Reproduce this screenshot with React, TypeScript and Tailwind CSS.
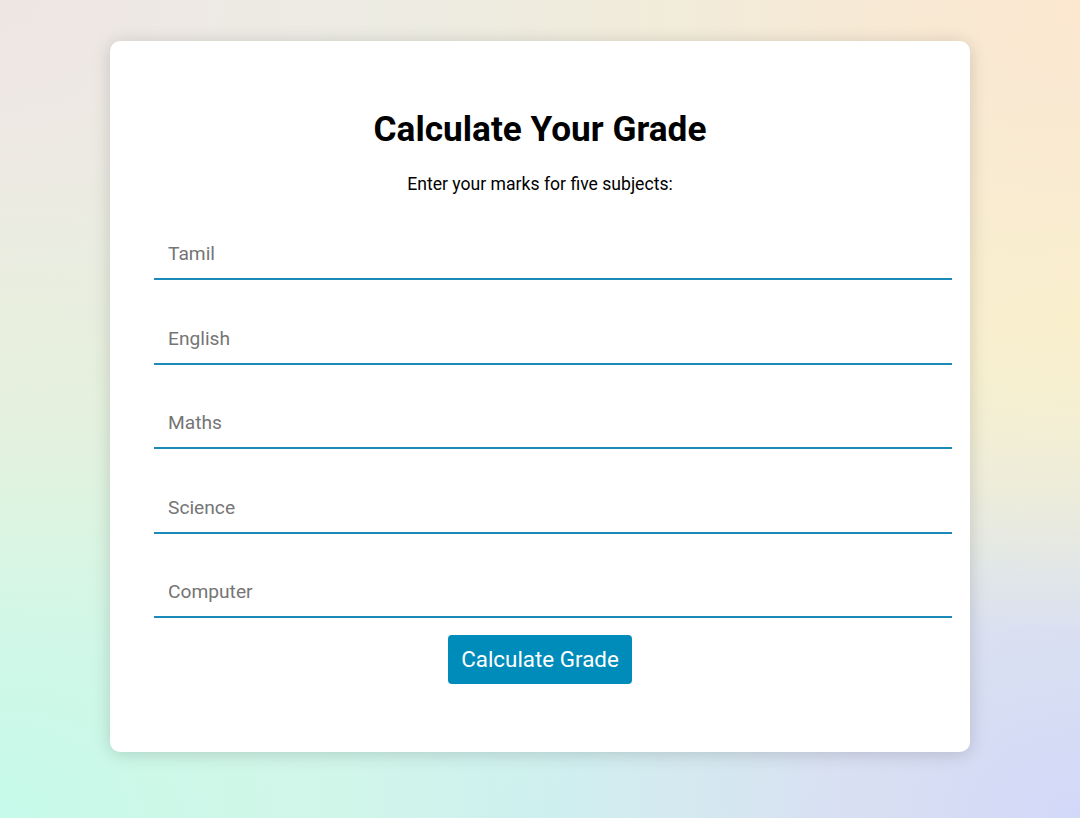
const subjects = ['Tamil', 'English', 'Maths', 'Science', 'Computer'];

export default function App() {
  return (
    <div className="min-h-[818px] w-full pt-[41px] font-['Roboto',sans-serif] bg-[#e9f0e2] bg-[radial-gradient(at_0%_0%,#efe6e4_0,transparent_45%),radial-gradient(at_100%_0%,#fce7d0_0,transparent_50%),radial-gradient(at_100%_38%,#f8f6ca_0,transparent_45%),radial-gradient(at_0%_40%,#e4f3da_0,transparent_45%),radial-gradient(at_0%_100%,#c6faea_0,transparent_55%),radial-gradient(at_100%_100%,#d2d8f8_0,transparent_50%),radial-gradient(at_50%_100%,#d4f1f0_0,transparent_50%)]">
      <div className="mx-auto w-[860px] bg-white rounded-[10px] shadow-[0_2px_18px_rgba(0,0,0,0.16)] px-[44px] pt-[68px] pb-[68px] flex flex-col items-center">
        <h1 className="text-[35.2px] leading-[40px] font-bold text-black">Calculate Your Grade</h1>
        <p className="mt-[23px] text-[17.6px] leading-[24px] text-black">Enter your marks for five subjects:</p>

        {/* Subject inputs */}
        <div className="mt-[37px] self-start flex flex-col gap-[37.5px]">
          {subjects.map((s) => (
            <input
              key={s}
              type="text"
              placeholder={s}
              className="w-[798px] pl-[14px] pr-[12px] pt-[10px] pb-[13px] text-[19.2px] leading-[22px] text-black placeholder-[#757575] bg-transparent border-b-2 border-[#1b8ab8] outline-none"
            />
          ))}
        </div>

        <button className="mt-[17px] h-[49px] px-[13px] pb-[2px] bg-[#008cba] text-white text-[22.4px] leading-[26px] rounded-[4px]">
          Calculate Grade
        </button>
      </div>
    </div>
  );
}
